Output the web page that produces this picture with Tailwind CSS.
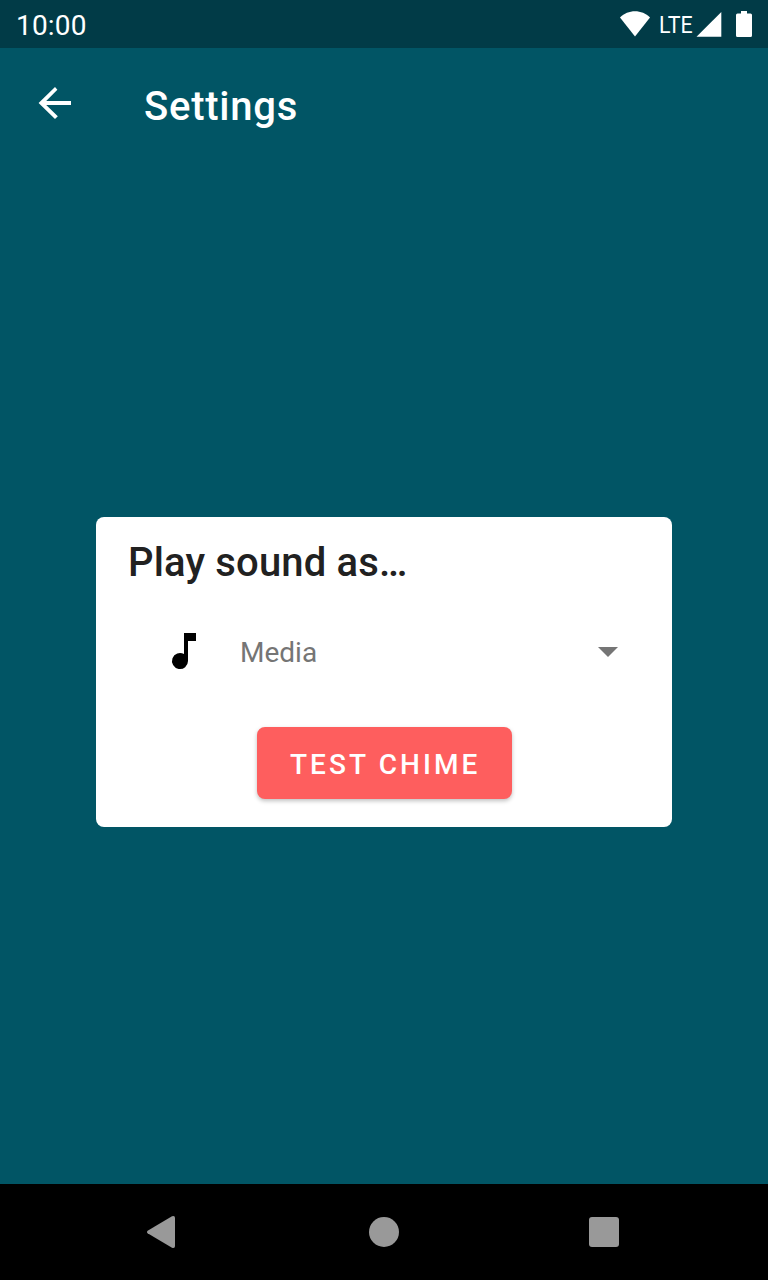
<!DOCTYPE html>
<html lang="en">
<head>
<meta charset="utf-8">
<title>Settings</title>
<script src="https://cdn.jsdelivr.net/npm/@tailwindcss/browser@4"></script>
</head>
<body class="w-[768px] h-[1280px] overflow-hidden bg-[#015565] font-['Roboto',sans-serif] flex flex-col">
  <div class="h-12 shrink-0 bg-[#013b47] text-white flex items-start">
    <span class="pl-4 pt-[2px] text-[28px] leading-[48px] tracking-[0.2px]">10:00</span>
    <svg class="ml-auto mt-[11px] w-[32px] h-[26px] shrink-0" viewBox="0 0 32 26" fill="#fff"><path d="M16 25.500 1 6.500C5 2.500 10.500 .300 16 .300S27 2.500 31 6.500z"/></svg>
    <span class="ml-[8px] w-[37px] pt-[1px] text-[24px] leading-[48px] whitespace-nowrap"><span class="inline-block origin-left scale-x-[0.89]">LTE</span></span>
    <svg class="mt-[12px] w-[26px] h-[25px] shrink-0" viewBox="0 0 26 25" fill="#fff"><path d="M.5 24.700 25.300 0v24.700z"/></svg>
    <svg class="ml-[14px] mr-4 mt-[11px] w-4 h-[26px] shrink-0" viewBox="0 0 16 26" fill="#fff"><path d="M5 0h6v2.500h3.500A1.500 1.500 0 0 1 16 4v20.500a1.500 1.500 0 0 1-1.500 1.500h-13A1.500 1.500 0 0 1 0 24.500V4a1.500 1.500 0 0 1 1.500-1.500H5z"/></svg>
  </div>
  <header class="h-28 shrink-0 flex items-start pl-[31px]">
    <svg class="mt-[31px] w-12 h-12" viewBox="0 0 24 24" fill="#fff"><path d="M20 11H7.600l5.590-5.590L12 4l-8.200 8 8.200 8 1.410-1.410L7.600 13H20v-2z"/></svg>
    <h1 class="ml-[65px] mt-[35px] text-[40px] leading-[48px] font-medium tracking-[0.75px] text-white">Settings</h1>
  </header>
  <main class="grow flex flex-col items-center">
    <section class="mt-[357px] w-[576px] h-[310px] rounded-lg bg-white flex flex-col">
      <h2 class="ml-8 mt-[22px] text-[40px] leading-[48px] font-medium tracking-[0.16px] text-[#212121]">Play sound as…</h2>
      <div class="mt-[40px] h-12 pl-16 pr-[54px] flex items-center">
        <svg class="w-12 h-12" viewBox="0 0 24 24"><path d="M12 3v10.550A4 4 0 1 0 14 17V7h4V3z"/></svg>
        <span class="ml-8 mt-[3px] text-[28px] leading-[48px] text-[#757575]">Media</span>
        <svg class="ml-auto mt-[2px] w-5 h-[10px]" viewBox="0 0 20 10" fill="#757575"><path d="M0 0h20L10 10z"/></svg>
      </div>
      <button class="mt-[52px] ml-[161px] w-[255px] h-[72px] pt-[4px] pl-[1.5px] rounded-lg bg-[#fe5e5e] shadow-[0_2px_4px_rgba(0,0,0,0.25)] text-[28px] leading-[68px] font-medium tracking-[3.1px] text-white flex items-center justify-center">TEST CHIME</button>
    </section>
  </main>
  <nav class="h-24 shrink-0 bg-black flex items-center pl-[147px]">
    <svg class="w-[28px] h-[32px]" viewBox="0 0 28 32" fill="#999"><path d="M.600 14.700 25 .300Q28-.700 28 2v28q0 2.700-3 1.700L.600 17.300Q-.600 16 .600 14.700z"/></svg>
    <div class="ml-[194px] w-[30px] h-[30px] rounded-full bg-[#999]"></div>
    <div class="ml-[190px] w-[30px] h-[30px] rounded-[3px] bg-[#999]"></div>
  </nav>
</body>
</html>
